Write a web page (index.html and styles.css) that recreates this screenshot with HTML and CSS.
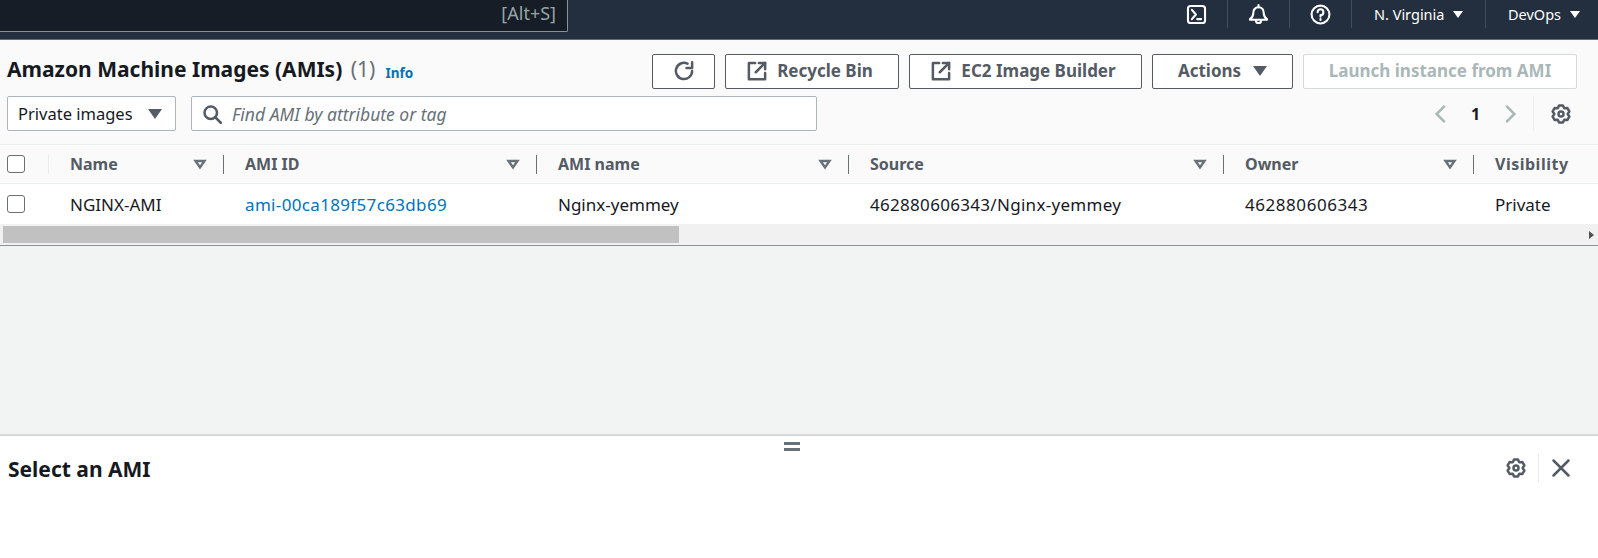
FILE: index.html
```html
<!DOCTYPE html>
<html lang="en">
<head>
    <meta charset="UTF-8">
    <meta name="viewport" content="width=device-width, initial-scale=1.0">
    <title>Amazon Machine Images</title>
    <link rel="stylesheet" href="styles.css">
</head>
<body>
    <svg class="icon-defs" aria-hidden="true">
        <symbol id="gear" viewBox="0 0 16 16">
            <path d="M6.43 1.18 9.57 1.18 10.45 3.19 10.94 3.47 13.12 3.23 14.69 5.95 13.39 7.72 13.39 8.28 14.69 10.05 13.12 12.77 10.94 12.53 10.45 12.81 9.57 14.82 6.43 14.82 5.55 12.81 5.06 12.53 2.88 12.77 1.31 10.05 2.61 8.28 2.61 7.72 1.31 5.95 2.88 3.23 5.06 3.47 5.55 3.19Z"/>
            <circle cx="8" cy="8" r="2"/>
        </symbol>
        <symbol id="external" viewBox="0 0 16 16">
            <path d="M14.500 9.500v5h-13v-13h5"/>
            <path d="M9.500 1.500h5v5"/>
            <path d="M14.500 1.500 7 9"/>
        </symbol>
        <symbol id="sort" viewBox="0 0 16 16">
            <path d="M3.500 5h9L8 11.500Z"/>
        </symbol>
    </svg>

    <header class="topbar">
        <div class="global-search">[Alt+S]</div>
        <div class="top-item top-icon top-first">
            <svg class="icon" viewBox="0 0 16 16"><rect x="1.500" y="1.500" width="13" height="13" rx="2"/><path d="M4.500 4.500 7.500 8l-3 3.500M8.500 11.500h3"/></svg>
        </div>
        <div class="top-item top-icon">
            <svg class="icon" viewBox="0 0 16 16"><path d="M8 2.500c-2.600 0-4 2-4 4.500 0 2-1 3.500-2.500 4.500v.5h13v-.5C13 10.500 12 9 12 7c0-2.500-1.400-4.500-4-4.500z"/><path d="M8 .8V2.500M6 12.500a2 2 0 0 0 4 0"/></svg>
        </div>
        <div class="top-item top-icon">
            <svg class="icon" viewBox="0 0 16 16"><circle cx="8" cy="8" r="6.800"/><path d="M5.800 6.200A2.200 2.200 0 1 1 8 8.400v1.300M8 11.500v.7"/></svg>
        </div>
        <div class="top-item top-menu region">N. Virginia <span class="caret"></span></div>
        <div class="top-item top-menu user">DevOps <span class="caret"></span></div>
    </header>

    <main class="content">
        <section class="panel">
            <div class="panel-head">
                <h1 class="panel-title">Amazon Machine Images (AMIs) <span class="count">(1)</span></h1>
                <a class="info-link">Info</a>
                <div class="actions">
                    <button class="btn btn-refresh">
                        <svg class="icon" viewBox="0 0 16 16"><path d="M14.500 8A6.500 6.500 0 1 1 10.800 2.100"/><path d="M14.500 1v4.500H10"/></svg>
                    </button>
                    <button class="btn btn-link btn-recycle"><svg class="icon"><use href="#external"/></svg>Recycle Bin</button>
                    <button class="btn btn-link btn-builder"><svg class="icon"><use href="#external"/></svg>EC2 Image Builder</button>
                    <button class="btn btn-actions">Actions <span class="caret caret-big"></span></button>
                    <button class="btn btn-launch">Launch instance from AMI</button>
                </div>
            </div>

            <div class="panel-filter">
                <div class="select">Private images <span class="caret caret-big"></span></div>
                <div class="search">
                    <svg class="icon search-icon" viewBox="0 0 16 16"><circle cx="7" cy="7" r="5"/><path d="M10.500 10.500 15 15"/></svg>
                    <span>Find AMI by attribute or tag</span>
                </div>
                <div class="pager">
                    <svg class="chevron" viewBox="0 0 16 16"><path d="M11 1.500 4.500 8l6.500 6.500"/></svg>
                    <span class="page-num">1</span>
                    <svg class="chevron" viewBox="0 0 16 16"><path d="M5 1.500 11.500 8 5 14.500"/></svg>
                </div>
                <div class="pager-settings"><svg class="icon"><use href="#gear"/></svg></div>
            </div>

            <div class="table">
                <div class="table-row table-head">
                    <div class="th th-check"><span class="checkbox"></span></div>
                    <div class="th">Name<svg class="sort"><use href="#sort"/></svg></div>
                    <div class="th">AMI ID<svg class="sort"><use href="#sort"/></svg></div>
                    <div class="th">AMI name<svg class="sort"><use href="#sort"/></svg></div>
                    <div class="th">Source<svg class="sort"><use href="#sort"/></svg></div>
                    <div class="th">Owner<svg class="sort"><use href="#sort"/></svg></div>
                    <div class="th th-last">Visibility</div>
                </div>
                <div class="table-row table-body">
                    <div class="td td-check"><span class="checkbox"></span></div>
                    <div class="td">NGINX-AMI</div>
                    <div class="td"><a class="ami-link">ami-00ca189f57c63db69</a></div>
                    <div class="td">Nginx-yemmey</div>
                    <div class="td td-source">462880606343/Nginx-yemmey</div>
                    <div class="td td-owner">462880606343</div>
                    <div class="td">Private</div>
                </div>
            </div>

            <div class="hscroll">
                <div class="hscroll-thumb"></div>
                <span class="hscroll-arrow"></span>
            </div>
        </section>

        <div class="empty-space"></div>

        <section class="split-panel">
            <div class="split-handle"><span></span><span></span></div>
            <div class="split-head">
                <h2 class="split-title">Select an AMI</h2>
                <div class="split-tools">
                    <svg class="icon"><use href="#gear"/></svg>
                    <span class="split-divider"></span>
                    <svg class="icon" viewBox="0 0 16 16"><path d="M2 2l12 12M14 2 2 14"/></svg>
                </div>
            </div>
        </section>
    </main>
</body>
</html>
```

FILE: styles.css
```css
/* Base */
html, body {
    height: 100%;
}
body {
    margin: 0;
    display: flex;
    flex-direction: column;
    overflow: hidden;
    font-family: 'Noto Sans', 'Open Sans', sans-serif;
    font-size: 16px;
    color: #16191f;
    background-color: #fff;
}
h1, h2 {
    margin: 0;
}
.icon-defs {
    display: none;
}
.icon {
    width: 20px;
    height: 20px;
    fill: none;
    stroke: #545b64;
    stroke-width: 2;
    stroke-linecap: round;
    stroke-linejoin: round;
    flex: none;
}
.caret {
    display: inline-block;
    width: 0;
    height: 0;
    border-left: 5.500px solid transparent;
    border-right: 5.500px solid transparent;
    border-top: 7px solid #fff;
}
.caret-big {
    border-left-width: 7px;
    border-right-width: 7px;
    border-top: 10px solid #545b64;
}

/* Top navigation */
.topbar {
    height: 39px;
    flex: none;
    display: flex;
    align-items: flex-start;
    background-color: #232f3e;
    border-bottom: 1px solid #5f6b7a;
    color: #fff;
}
.global-search {
    width: 556px;
    height: 31px;
    padding-right: 11px;
    font-size: 18px;
    line-height: 26px;
    text-align: right;
    color: #95a5a6;
    background-color: #161d26;
    border-right: 1px solid #879596;
    border-bottom: 1px solid #879596;
    border-bottom-right-radius: 2px;
}
.top-item {
    height: 28px;
    display: flex;
    align-items: center;
    box-sizing: border-box;
    border-left: 1px solid #414d5c;
}
.top-icon {
    width: 62px;
    justify-content: center;
}
.top-icon .icon {
    stroke: #fff;
    stroke-width: 1.600;
    width: 21px;
    height: 21px;
}
.top-first {
    margin-left: auto;
    border-left: none;
}
.top-menu {
    font-size: 14.500px;
    padding-left: 22px;
    gap: 9px;
}
.region {
    width: 134px;
}
.user {
    width: 113px;
}

/* AMI list panel */
.content {
    flex: 1;
    display: flex;
    flex-direction: column;
    background-color: #f2f3f3;
}
.panel {
    background-color: #fafafa;
    border-bottom: 1px solid #879596;
}
.panel-head {
    display: flex;
    align-items: center;
    padding: 14px 21px 0 7px;
}
.panel-title {
    margin-bottom: 6px;
    font-size: 21px;
    font-weight: 700;
    color: #16191f;
}
.count {
    margin-left: 3px;
    font-weight: 400;
    color: #687078;
}
.info-link {
    margin-left: 10px;
    margin-top: 3px;
    font-size: 13.500px;
    font-weight: 700;
    color: #0073bb;
}
.actions {
    display: flex;
    gap: 10px;
    margin-left: auto;
}
.btn {
    height: 35px;
    display: flex;
    align-items: center;
    justify-content: center;
    gap: 10px;
    padding: 0 0 2px;
    font-family: inherit;
    font-size: 17px;
    font-weight: 700;
    color: #545b64;
    background-color: #fff;
    border: 1px solid #545b64;
    border-radius: 2px;
}
.btn-link {
    padding-right: 4px;
}
.btn-refresh {
    width: 63px;
}
.btn-recycle {
    width: 174px;
}
.btn-builder {
    width: 233px;
}
.btn-actions {
    width: 141px;
    gap: 12px;
}
.btn-launch {
    width: 274px;
    color: #aab7b8;
    border-color: #d5dbdb;
}
.panel-filter {
    display: flex;
    align-items: center;
    padding: 7px 0 13px 7px;
}
.select {
    width: 169px;
    height: 35px;
    box-sizing: border-box;
    display: flex;
    align-items: center;
    justify-content: space-between;
    padding: 0 13px 0 10px;
    font-size: 16.500px;
    background-color: #fff;
    border: 1px solid #aab7b8;
    border-radius: 2px;
}
.search {
    width: 626px;
    height: 35px;
    margin-left: 15px;
    box-sizing: border-box;
    display: flex;
    align-items: center;
    gap: 10px;
    padding-left: 10px;
    font-size: 17.500px;
    font-style: italic;
    color: #687078;
    background-color: #fff;
    border: 1px solid #aab7b8;
    border-radius: 2px;
}
.pager {
    display: flex;
    align-items: center;
    margin-left: auto;
}
.chevron {
    width: 20px;
    height: 20px;
    fill: none;
    stroke: #aab7b8;
    stroke-width: 2;
}
.page-num {
    width: 49px;
    text-align: center;
    font-weight: 700;
}
.pager-settings {
    height: 35px;
    margin-left: 13px;
    padding: 0 27px 0 17px;
    display: flex;
    align-items: center;
    border-left: 1px solid #eaeded;
}

/* Table */
.table-row {
    display: grid;
    grid-template-columns: 49px 175px 313px 312px 375px 250px 1fr;
    align-items: center;
}
.table-head {
    height: 38px;
    border-top: 1px solid #eaeded;
    border-bottom: 1px solid #eaeded;
    font-weight: 700;
    color: #545b64;
}
.th {
    height: 19px;
    padding: 0 15px 0 21px;
    display: flex;
    align-items: center;
    justify-content: space-between;
    line-height: 19px;
    border-right: 1px solid #687078;
}
.th-check {
    padding: 0 0 0 7px;
    border-right-color: #eaeded;
}
.th-last {
    border-right: none;
    letter-spacing: 0.500px;
}
.sort {
    width: 16px;
    height: 16px;
    fill: none;
    stroke: #687078;
    stroke-width: 2.400;
}
.table-body {
    height: 40px;
    background-color: #fff;
    font-size: 17px;
}
.td {
    padding-left: 21px;
    white-space: nowrap;
}
.td-check {
    padding-left: 7px;
    display: flex;
}
.td-source {
    letter-spacing: 0.300px;
}
.td-owner {
    letter-spacing: 0.550px;
}
.checkbox {
    display: block;
    width: 16px;
    height: 16px;
    background-color: #fff;
    border: 1px solid #687078;
    border-radius: 3px;
}
.ami-link {
    color: #0073bb;
    letter-spacing: 0.340px;
}
.hscroll {
    height: 17px;
    padding: 2px 0 2px 3px;
    display: flex;
    align-items: stretch;
    background-color: #f1f1f1;
}
.hscroll-thumb {
    width: 676px;
    background-color: #c1c1c1;
}
.hscroll-arrow {
    margin: auto 4px auto auto;
    width: 0;
    height: 0;
    border-top: 4px solid transparent;
    border-bottom: 4px solid transparent;
    border-left: 5px solid #505050;
}
.empty-space {
    flex: 1;
}

/* Split panel */
.split-panel {
    height: 122px;
    flex: none;
    background-color: #fff;
    border-top: 2px solid #d5dbdb;
}
.split-handle {
    display: flex;
    flex-direction: column;
    align-items: center;
    gap: 3px;
    padding: 6px 14px 0 0;
}
.split-handle span {
    width: 16px;
    height: 3px;
    background-color: #687078;
}
.split-head {
    display: flex;
    align-items: center;
    justify-content: space-between;
    padding: 2px 27px 0 8px;
}
.split-title {
    margin-top: 2px;
    font-size: 21px;
    font-weight: 700;
}
.split-tools {
    display: flex;
    align-items: center;
    gap: 12px;
}
.split-divider {
    width: 1px;
    height: 30px;
    background-color: #eaeded;
}
```
